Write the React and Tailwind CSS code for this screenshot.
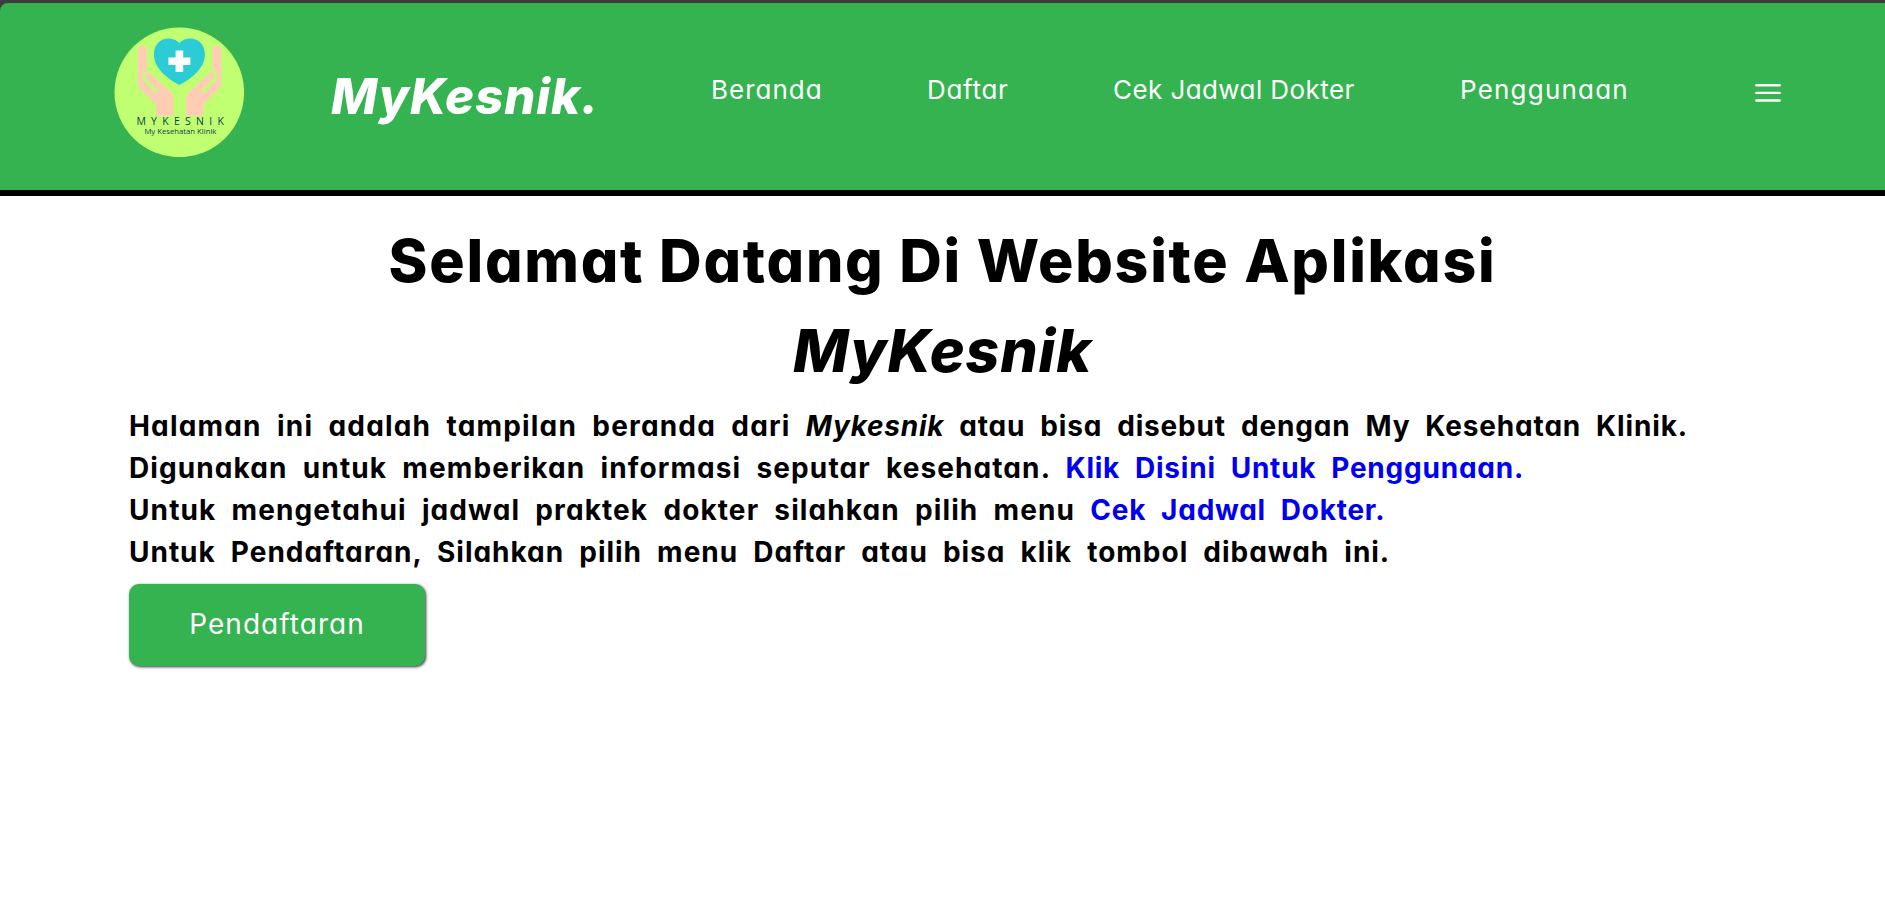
const navItems = [
  { label: "Beranda", cls: "w-[216px] tracking-[1px]" },
  { label: "Daftar", cls: "w-[186px] tracking-[0.7px]" },
  { label: "Cek Jadwal Dokter", cls: "w-[347px] tracking-[0.42px]" },
  { label: "Penggunaan", cls: "w-[295px] tracking-[1.2px]" },
];

function Logo() {
  return (
    <svg viewBox="-0.4 -0.4 130 130" className="h-[130px] w-[130px] shrink-0">
      <circle cx="64.900" cy="65" r="64.800" fill="#c1ff72" />
      <path
        d="M65 57.500C56 53 39.500 42 39.500 27C39.500 11 56 7 65 15.500C74 7 90.500 11 90.500 27C90.500 42 74 53 65 57.500Z"
        fill="#2bccd6"
      />
      <path d="M61.200 23h7.600v7h7.200v7.500h-7.200v7h-7.600v-7h-7.200v-7.500h7.200z" fill="#fff" />
      <g id="hand" fill="#ffcdb4">
        <path d="M23.500 22.500a4.500 4.500 0 0 1 9 0V43C28 45 26 49 29 53L41 65.500L43.500 63L31.500 51C28.500 47 33 43.500 36 46L54.500 63Q59 67 59 72V88.300H41.500V77L25.500 61Q23.500 59 23.500 56Z" />
      </g>
      <use href="#hand" transform="translate(130.400 0) scale(-1 1)" />
      <text
        x="22"
        y="98"
        textLength="87.500"
        className="font-['Open_Sans',sans-serif] text-[10.500px]"
        fill="#123b4a"
      >
        MYKESNIK
      </text>
      <text
        x="30"
        y="106.800"
        textLength="72"
        lengthAdjust="spacingAndGlyphs"
        className="font-['Open_Sans',sans-serif] text-[8px]"
        fill="#123b4a"
      >
        My Kesehatan Klinik
      </text>
    </svg>
  );
}

export default function App() {
  return (
    <div className="h-[920px] w-[1885px] overflow-hidden bg-white font-['Inter',sans-serif] text-black [font-feature-settings:'cv11']">
      <div className="bg-[#3c3c3c] pt-[3px]">
        <header className="flex h-[193px] items-start rounded-tl-[8px] border-b-[6px] border-black bg-[#34b350] pl-[114px] text-white">
          <div className="mt-[24px]">
            <Logo />
          </div>
          <div className="mt-[59px] ml-[87px] w-[380px] text-[49px] leading-[70px] font-extrabold tracking-[0.9px] whitespace-nowrap italic">
            MyKesnik.
          </div>
          <nav className="mt-[68px] flex text-[26px] leading-[38px] whitespace-nowrap">
            {navItems.map((n) => (
              <a key={n.label} className={n.cls}>
                {n.label}
              </a>
            ))}
          </nav>
          <svg
            viewBox="0 0 26 20"
            className="mt-[80px] h-[20px] w-[26px]"
            stroke="#fff"
            strokeWidth="2.4"
            strokeLinecap="round"
          >
            <path d="M1.300 2.300H24.700M1.300 9.900H24.700M1.300 17.500H24.700" />
          </svg>
        </header>
      </div>
      <main className="pt-[20px] pl-[129px]">
        <h1 className="-ml-[129px] text-center text-[59px] leading-[90px] font-extrabold">
          <div className="tracking-[1.75px]">Selamat Datang Di Website Aplikasi</div>
          <div className="tracking-[0.85px] italic">MyKesnik</div>
        </h1>
        <div className="mt-[9px] text-[28px] leading-[42px] font-bold whitespace-nowrap [word-spacing:7.5px]">
          <p className="tracking-[1.18px]">
            Halaman ini adalah tampilan beranda dari <i className="tracking-[0.75px]">Mykesnik</i>
            <span className="tracking-[0.84px]"> atau bisa disebut dengan My Kesehatan Klinik.</span>
          </p>
          <p className="tracking-[1.1px]">
            Digunakan untuk memberikan informasi seputar kesehatan.{" "}
            <a className="tracking-[0.77px] text-[#0000ee]">Klik Disini Untuk Penggunaan.</a>
          </p>
          <p className="tracking-[1.1px]">
            Untuk mengetahui jadwal praktek dokter silahkan pilih menu{" "}
            <a className="tracking-[0.75px] text-[#0000ee]">Cek Jadwal Dokter.</a>
          </p>
          <p className="tracking-[0.98px]">
            Untuk Pendaftaran, Silahkan pilih menu Daftar atau bisa klik tombol dibawah ini.
          </p>
        </div>
        <button className="mt-[11px] block h-[82px] w-[296px] rounded-[10px] bg-[#34b350] pb-[2px] text-[28px] tracking-[1.05px] text-white shadow-[1px_1px_3px_#333]">
          Pendaftaran
        </button>
      </main>
    </div>
  );
}
